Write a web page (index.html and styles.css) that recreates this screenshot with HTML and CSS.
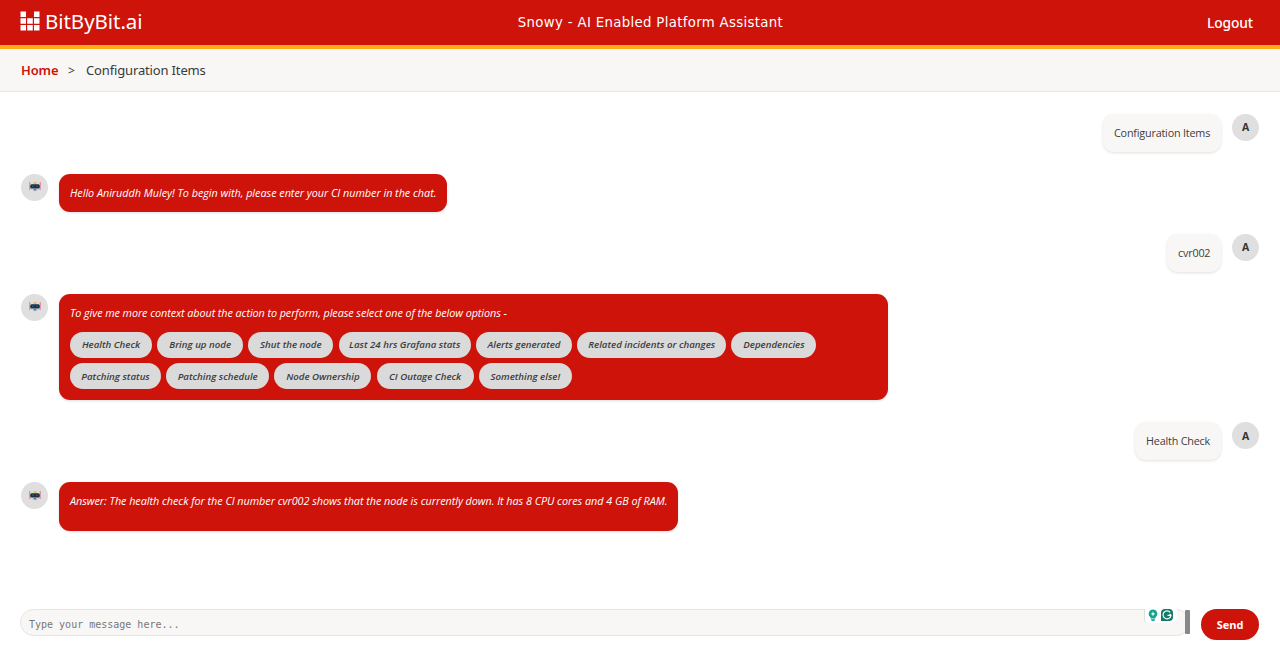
FILE: index.html
```html
<!DOCTYPE html>
<html lang="en">
<head>
<meta charset="utf-8">
<title>Snowy - AI Enabled Platform Assistant</title>
<link rel="stylesheet" href="styles.css">
</head>
<body>
<svg class="defs" width="0" height="0" aria-hidden="true">
  <symbol id="robot" viewBox="0 0 12 12">
    <path fill="#e76373" d="M.4 1h.8v8H.4zM10.8 1h.8v8h-.8z"/>
    <path fill="#f0a9b0" d="M.7 5h1.2v4H.7zM10.1 5h1.2v4h-1.2z"/>
    <path fill="#f4bd58" d="M4.3 1.4Q6 0 7.7 1.4V3H4.3z"/>
    <path fill="#d3d3e2" d="M1.6 3h8.8v4.5Q9.5 10.500 6 10.500T1.600 7.500z"/>
    <rect x="1.200" y="3.200" width="9.600" height="4.200" rx="1.500" fill="#17344b"/>
    <path fill="#6fa5ba" d="M3.500 4.700h1v.9h-1zM7.500 4.700h1v.9h-1z"/>
    <path fill="#353346" d="M4.600 8.400h2.800v.9H4.600z"/>
  </symbol>
</svg>
<header class="topbar">
  <div class="brand">
    <svg class="logo" width="20" height="20" viewBox="0 0 20 20" fill="#fff"><path d="M.5.500h5.500v5.500H.5zM14 .5h5.500v5.500H14zM.5 7.200h5.500v5.500H.5zM7.200 7.200h5.600v5.500H7.200zM14 7.200h5.500v5.500H14zM.5 13.900h5.500v5.500H.5zM7.200 13.900h5.600v5.500H7.200zM14 13.900h5.500v5.500H14z"/></svg>
    <span class="brand-name">BitByBit.ai</span>
  </div>
  <h1 class="title">Snowy - AI Enabled Platform Assistant</h1>
  <a class="logout">Logout</a>
</header>
<nav class="crumbs"><a class="home">Home</a><span class="sep">&gt;</span><span class="current">Configuration Items</span></nav>
<main class="chat">
  <div class="row user"><div class="bubble b-config">Configuration Items</div><div class="avatar">A</div></div>
  <div class="row"><div class="avatar"><svg width="12" height="12"><use href="#robot"/></svg></div><div class="bubble b-hello"><span class="t-hello">Hello Aniruddh Muley! To begin with, please enter your CI number in the chat.</span></div></div>
  <div class="row user"><div class="bubble b-cvr">cvr002</div><div class="avatar">A</div></div>
  <div class="row"><div class="avatar"><svg width="12" height="12"><use href="#robot"/></svg></div>
    <div class="bubble b-options"><span class="t-options">To give me more context about the action to perform, please select one of the below options -</span>
      <div class="options">
        <div class="line"><button class="pill w82">Health Check</button><button class="pill w86">Bring up node</button><button class="pill w85">Shut the node</button><button class="pill w132">Last 24 hrs Grafana stats</button><button class="pill w96">Alerts generated</button><button class="pill w149">Related incidents or changes</button><button class="pill w85">Dependencies</button></div>
        <div class="line"><button class="pill w91">Patching status</button><button class="pill w103">Patching schedule</button><button class="pill w97">Node Ownership</button><button class="pill w97">CI Outage Check</button><button class="pill w93">Something else!</button></div>
      </div>
    </div>
  </div>
  <div class="row user"><div class="bubble b-health">Health Check</div><div class="avatar">A</div></div>
  <div class="row"><div class="avatar"><svg width="12" height="12"><use href="#robot"/></svg></div><div class="bubble b-answer"><span class="t-answer">Answer: The health check for the CI number cvr002 shows that the node is currently down. It has 8 CPU cores and 4 GB of RAM.</span></div></div>
</main>
<footer class="composer">
  <div class="field"><span class="placeholder">Type your message here...</span>
    <div class="assist">
      <svg width="10" height="13" viewBox="0 0 10 13"><path fill="#15a28d" d="M5 .5a4.300 4.300 0 0 0-2.500 7.800V9.500h5V8.300A4.300 4.300 0 0 0 5 .5zM3 10.200h4v.8L6 12H4l-1-1z"/><path fill="#fff" d="M5 2.300l.7 1.900 1.900.7-1.900.7L5 7.500l-.7-1.900-1.900-.7 1.900-.7z"/></svg>
      <svg width="12" height="12" viewBox="0 0 12 12"><path fill="#157a68" d="M4 0h4a4 4 0 0 1 4 4v4a4 4 0 0 1-4 4H0V4a4 4 0 0 1 4-4z"/><path d="M9.200 3.400A4 4 0 1 0 10 6.400H6.500M10 6.400L8.600 5" fill="none" stroke="#fff" stroke-width="1.200"/></svg>
    </div>
    <div class="thumb"></div>
  </div>
  <button class="send">Send</button>
</footer>
</body>
</html>
```
FILE: styles.css
```css
* { box-sizing: border-box; }
body { margin: 0; height: 657px; overflow: hidden; display: flex; flex-direction: column; background: #fff; font-family: "Open Sans", "Noto Sans", sans-serif; color: #3a3a3a; }
button { border: 0; font-family: inherit; padding: 0; }
.defs { position: absolute; }
.topbar { height: 48.600px; flex: none; display: grid; grid-template-columns: 1fr auto 1fr; align-items: center; padding: 0 27px 0 20px; background: #cd130a; border-bottom: 4px solid #ffad14; color: #fff; }
.brand { display: flex; align-items: center; gap: 5px; height: 44px; padding-bottom: 2px; }
.brand-name { font: 20.500px/28px "Noto Sans", sans-serif; letter-spacing: -.05px; }
.logo { margin-bottom: 1px; }
.title { margin: 0; padding: 2px 0 0 28px; font: 400 13.300px/20px "DejaVu Sans", sans-serif; letter-spacing: .33px; }
.logout { justify-self: end; font: 500 13.800px/20px "Noto Sans", sans-serif; letter-spacing: -.1px; padding-top: 1px; }
.crumbs { height: 43.400px; flex: none; display: flex; align-items: center; padding-left: 21px; background: #f8f7f5; border-bottom: 1px solid #e6e6e6; font: 13px/20px "Noto Sans", sans-serif; }
.home { color: #cd130a; font-weight: 600; width: 47px; letter-spacing: -.15px; }
.sep { width: 18px; font-size: 12px; padding-top: 2px; }
.current { letter-spacing: -.15px; }
.chat { flex: 1; display: flex; flex-direction: column; gap: 22px; padding: 21.600px 21px 0; }
.row { display: flex; align-items: flex-start; gap: 11px; }
.user { justify-content: flex-end; }
.avatar { width: 27px; height: 27px; flex: none; display: flex; align-items: center; justify-content: center; border-radius: 50%; background: #dfdfdf; font-size: 10.500px; font-weight: 700; color: #333; }
.bubble { height: 38px; padding: 11px; border-radius: 11px; background: #cd130a; color: #fff; font-size: 10.800px; line-height: 16px; font-style: italic; white-space: nowrap; box-shadow: 0 1px 3px rgba(0,0,0,.12); }
.user .bubble { background: #f8f7f6; color: #3d3d3d; font-style: normal; letter-spacing: -.19px; }
.b-config { width: 118px; }
.b-cvr { width: 54px; }
.b-health { width: 86px; }
.b-hello { width: 388px; }
.b-answer { width: 619px; height: 49px; }
.b-options { width: 829px; height: 106.500px; }
.t-hello { letter-spacing: -.02px; }
.t-options { letter-spacing: -.07px; }
.t-answer { letter-spacing: -.035px; }
.options { display: flex; flex-direction: column; gap: 5.500px; padding-top: 11px; }
.line { display: flex; gap: 5.200px; }
.pill { height: 26px; border-radius: 13px; background: #dadada; color: #3c3c3c; font-size: 9.700px; font-style: italic; font-weight: 600; flex: none; }
.w82 { width: 82px; } .w85 { width: 85px; } .w86 { width: 86px; } .w91 { width: 91px; }
.w93 { width: 93px; } .w96 { width: 96px; } .w97 { width: 97px; } .w103 { width: 103px; }
.w132 { width: 132.300px; } .w149 { width: 149px; }
.composer { height: 48px; flex: none; display: flex; align-items: flex-start; gap: 11px; padding: 0 21px 0 20px; }
.field { position: relative; flex: 1; height: 27px; padding: 7px 8px; border: 1px solid #e4e4e4; border-radius: 14px; background: #f8f7f6; }
.placeholder { display: block; font: 10px/15px "DejaVu Sans Mono", monospace; color: #777; }
.assist { position: absolute; right: 12px; top: -1px; height: 14px; width: 33px; display: flex; gap: 3px; padding-left: 3px; background: #fff; border-radius: 0 0 7px 4px; border-left: 1px solid #dedede; }
.thumb { position: absolute; right: -1px; top: 0; width: 5px; height: 24px; border-radius: 1px; background: #888; }
.send { width: 58px; height: 31px; border-radius: 16px; background: #cd130a; color: #fff; font-size: 11px; font-weight: 700; }
```
